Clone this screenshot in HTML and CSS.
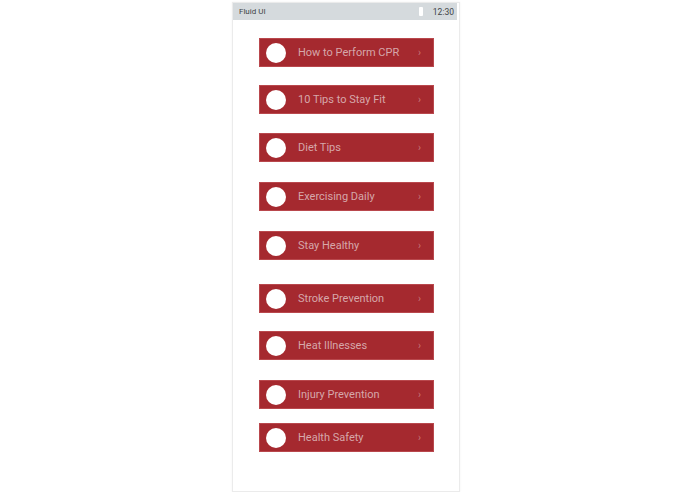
FILE: index.html
```html
<!DOCTYPE html>
<html>
<head>
<meta charset="utf-8">
<link rel="stylesheet" href="styles.css">
</head>
<body>
<div class="phone">
  <div class="status">
    <span class="carrier">Fluid UI</span>
    <span class="status-right"><span class="battery"></span><span class="time">12:30</span></span>
  </div>
  <ul class="menu">
    <li class="item"><span class="dot"></span><span class="label">How to Perform CPR</span><span class="chev">›</span></li>
    <li class="item"><span class="dot"></span><span class="label">10 Tips to Stay Fit</span><span class="chev">›</span></li>
    <li class="item"><span class="dot"></span><span class="label">Diet Tips</span><span class="chev">›</span></li>
    <li class="item"><span class="dot"></span><span class="label">Exercising Daily</span><span class="chev">›</span></li>
    <li class="item"><span class="dot"></span><span class="label">Stay Healthy</span><span class="chev">›</span></li>
    <li class="item"><span class="dot"></span><span class="label">Stroke Prevention</span><span class="chev">›</span></li>
    <li class="item"><span class="dot"></span><span class="label">Heat Illnesses</span><span class="chev">›</span></li>
    <li class="item"><span class="dot"></span><span class="label">Injury Prevention</span><span class="chev">›</span></li>
    <li class="item"><span class="dot"></span><span class="label">Health Safety</span><span class="chev">›</span></li>
  </ul>
</div>
</body>
</html>
```
FILE: styles.css
```css
html, body {
  margin: 0;
  padding: 0;
  background: #ffffff;
}
body {
  padding-top: 2px;
  font-family: Roboto, "Liberation Sans", sans-serif;
}
.phone {
  width: 226px;
  height: 488px;
  margin-left: 232px;
  border: 1px solid #ebebeb;
  box-shadow: 0 0 2px rgba(0,0,0,0.06);
  background: #fff;
  box-sizing: content-box;
}
.status {
  height: 17px;
  margin: 0 2px 0 0;
  background: #d5dadd;
  display: flex;
  align-items: center;
  justify-content: space-between;
  padding: 0 3px 0 6px;
  font-size: 8px;
  color: #3e4447;
}
.status-right {
  display: flex;
  align-items: center;
  gap: 10px;
}
.battery {
  width: 4px;
  height: 9px;
  background: #fff;
  border-radius: 1px;
}
.time {
  font-size: 8.5px;
}
.menu {
  list-style: none;
  margin: 0;
  padding: 18px 0 0 26px;
}
.item {
  width: 175px;
  height: 29px;
  box-sizing: border-box;
  background: #a5292f;
  border: 1px solid #b9484d;
  display: flex;
  align-items: center;
  padding-left: 6px;
  margin-bottom: 18px;
}
.item:nth-child(2) { margin-bottom: 19px; }
.item:nth-child(3) { margin-bottom: 20px; }
.item:nth-child(4) { margin-bottom: 20px; }
.item:nth-child(5) { margin-bottom: 24px; }
.item:nth-child(6) { margin-bottom: 18px; }
.item:nth-child(7) { margin-bottom: 20px; }
.item:nth-child(8) { margin-bottom: 14px; }
.dot {
  width: 20px;
  height: 20px;
  border-radius: 50%;
  background: #fff;
  flex: none;
}
.label {
  flex: 1;
  margin-left: 12px;
  font-size: 11px;
  color: #d6a7aa;
  white-space: nowrap;
}
.chev {
  color: #c7777b;
  font-size: 10px;
  margin-right: 12px;
}
```
